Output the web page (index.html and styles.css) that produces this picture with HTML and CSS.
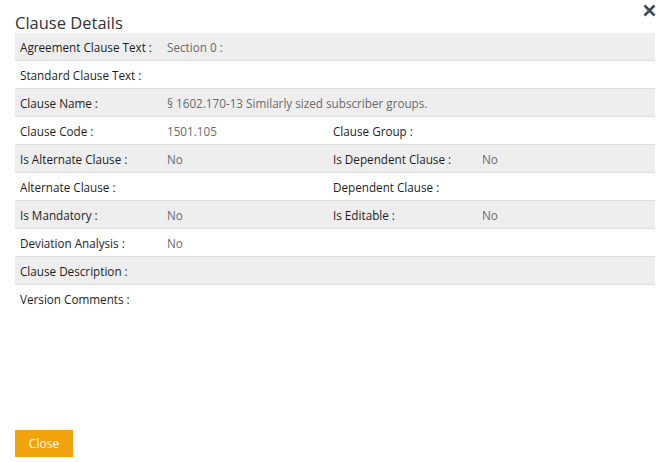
FILE: index.html
```html
<!DOCTYPE html>
<html>
<head>
<meta charset="utf-8">
<link rel="stylesheet" href="styles.css">
</head>
<body>
<div class="dialog">
  <div class="header">
    <h1 class="title">Clause Details</h1>
    <button class="close-x" aria-label="Close">
      <svg width="13" height="13" viewBox="0 0 13 13"><path d="M1.5 1.5 L11.5 11.5 M11.5 1.5 L1.5 11.5" stroke="#3f4a52" stroke-width="2.6" stroke-linecap="butt"/></svg>
    </button>
  </div>
  <div class="details">
    <div class="row"><div class="lbl">Agreement Clause Text :</div><div class="val wide">Section 0 :</div></div>
    <div class="row"><div class="lbl">Standard Clause Text :</div><div class="val wide"></div></div>
    <div class="row"><div class="lbl">Clause Name :</div><div class="val wide">§ 1602.170-13 Similarly sized subscriber groups.</div></div>
    <div class="row"><div class="lbl">Clause Code :</div><div class="val">1501.105</div><div class="lbl">Clause Group :</div><div class="val"></div></div>
    <div class="row"><div class="lbl">Is Alternate Clause :</div><div class="val">No</div><div class="lbl">Is Dependent Clause :</div><div class="val">No</div></div>
    <div class="row"><div class="lbl">Alternate Clause :</div><div class="val"></div><div class="lbl">Dependent Clause :</div><div class="val"></div></div>
    <div class="row"><div class="lbl">Is Mandatory :</div><div class="val">No</div><div class="lbl">Is Editable :</div><div class="val">No</div></div>
    <div class="row"><div class="lbl">Deviation Analysis :</div><div class="val">No</div><div class="lbl"></div><div class="val"></div></div>
    <div class="row"><div class="lbl">Clause Description :</div><div class="val wide"></div></div>
    <div class="row last"><div class="lbl">Version Comments :</div><div class="val wide"></div></div>
  </div>
  <div class="footer">
    <button class="btn-close">Close</button>
  </div>
</div>
</body>
</html>
```
FILE: styles.css
```css
* { box-sizing: border-box; }
html, body { margin: 0; padding: 0; background: #fff; }
body {
  font-family: "Open Sans", "Noto Sans", sans-serif;
  font-size: 11.7px;
  color: #333;
  width: 663px;
  height: 462px;
}
.dialog {
  display: flex;
  flex-direction: column;
  height: 462px;
  padding: 0 8px 5px 15px;
}
.header {
  display: flex;
  justify-content: space-between;
  align-items: flex-start;
  height: 33px;
}
.title {
  margin: 12px 0 0 0;
  font-size: 16.5px;
  font-weight: normal;
  line-height: 21px;
  color: #333;
}
.close-x {
  border: 0;
  background: none;
  padding: 0;
  margin: 4px -1px 0 0;
  width: 13px;
  height: 13px;
  display: block;
}
.close-x svg { display: block; }
.details {
  display: flex;
  flex-direction: column;
  width: 640px;
}
.row {
  display: grid;
  grid-template-columns: 147px 166px 149px 1fr;
  height: 28px;
  align-items: center;
  border-bottom: 1px solid #dcdcdc;
}
.row:nth-child(odd) { background: #eeeeee; }
.row.last { border-bottom: 0; }
.lbl {
  padding-left: 5px;
  color: #1e1e1e;
  white-space: nowrap;
}
.val {
  padding-left: 5px;
  color: #6a6a6a;
  white-space: nowrap;
}
.val.wide { grid-column: 2 / 5; }
.footer {
  margin-top: auto;
}
.btn-close {
  background: #f0a30a;
  color: #fff;
  border: 0;
  font-family: "Open Sans", "Noto Sans", sans-serif;
  font-size: 12px;
  width: 58px;
  height: 27px;
  padding: 0;
  display: block;
}
```
